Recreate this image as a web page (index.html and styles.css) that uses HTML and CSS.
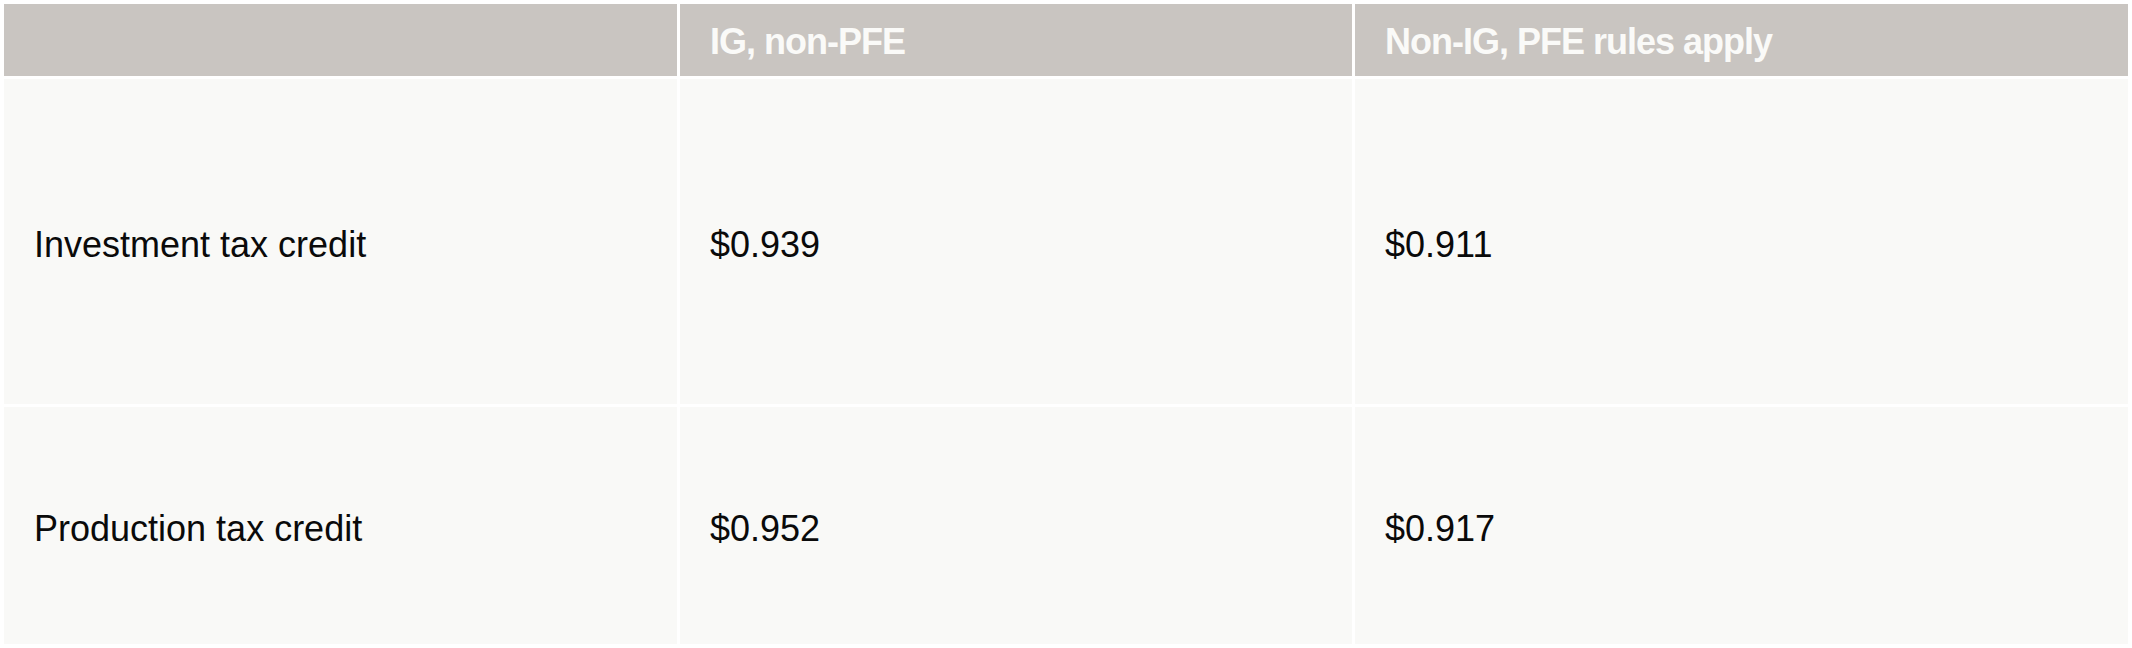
FILE: index.html
```html
<!DOCTYPE html>
<html lang="en">
<head>
<meta charset="utf-8">
<title>Tax credit pricing</title>
<link rel="stylesheet" href="styles.css">
</head>
<body>
<div class="table">
  <div class="cell head"></div>
  <div class="cell head">IG, non-PFE</div>
  <div class="cell head">Non-IG, PFE rules apply</div>

  <div class="cell row1">Investment tax credit</div>
  <div class="cell row1">$0.939</div>
  <div class="cell row1">$0.911</div>

  <div class="cell row2">Production tax credit</div>
  <div class="cell row2">$0.952</div>
  <div class="cell row2">$0.917</div>
</div>
</body>
</html>
```

FILE: styles.css
```css
html, body {
  margin: 0;
  padding: 0;
  background: #ffffff;
}
body {
  padding: 4px;
  font-family: "Liberation Sans", Arial, sans-serif;
}
.table {
  display: grid;
  grid-template-columns: 673px 672px 1fr;
  grid-template-rows: 72px 325px 237px;
  column-gap: 3px;
  row-gap: 3px;
}
.cell {
  display: flex;
  align-items: center;
  padding-left: 30px;
  padding-top: 6px;
  background: #f9f9f7;
  color: #0a0a0a;
  font-size: 36px;
  line-height: 1;
}
.head {
  padding-top: 3px;
  background: #c9c5c1;
  color: #fafaf8;
  font-weight: bold;
  letter-spacing: -1px;
}
```
